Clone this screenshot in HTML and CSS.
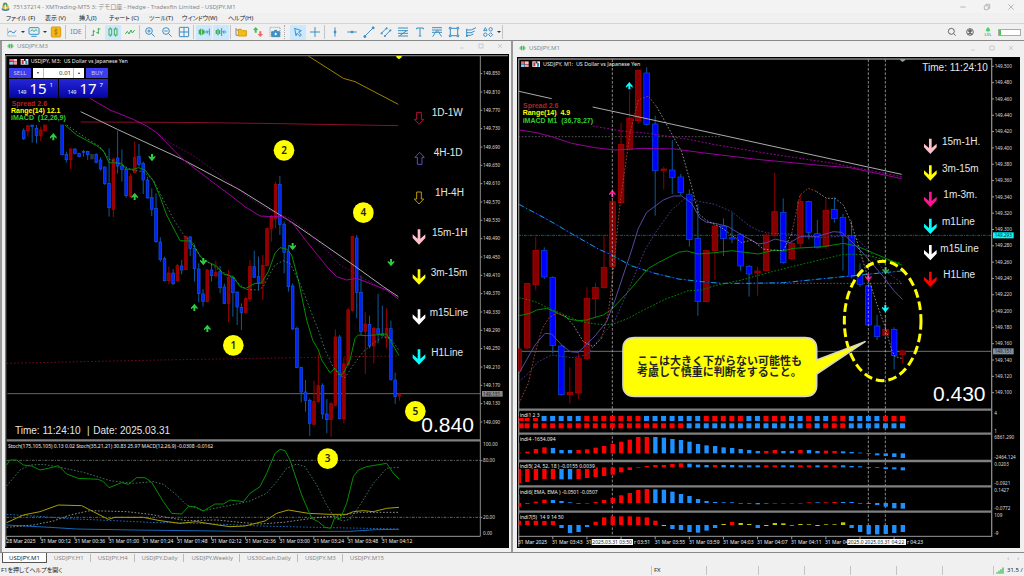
FILE: index.html
```html
<!DOCTYPE html>
<html lang="ja">
<head>
<meta charset="utf-8">
<title>75137214 - XMTrading-MT5 3</title>
<link rel="stylesheet" href="styles.css">
</head>
<body>
<div class="app">
  <header class="titlebar">
    <svg class="app-logo" viewBox="0 0 24 24"><circle cx="12" cy="14" r="9" fill="#e8b93c"/><circle cx="11" cy="7" r="6" fill="#4f9a57"/><path d="M2 15c5 7 15 7 20 0v6c-6 4-14 4-20 0z" fill="#3f7fb5"/><path d="M14 9c-5-2-7 3-2 4s3 6-3 3M12 7v11" stroke="#fff" stroke-width="2" fill="none"/></svg>
    <span class="app-title">75137214 - XMTrading-MT5 3: デモ口座 - Hedge - Tradexfin Limited - USDJPY,M1</span>
    <div class="window-controls">
      <button aria-label="Minimize"><svg viewBox="0 0 24 24"><path d="M4 12h16"/></svg></button>
      <button aria-label="Restore"><svg viewBox="0 0 24 24"><rect x="4" y="8" width="12" height="12" rx="2"/><path d="M9 7V4h11v12h-3"/></svg></button>
      <button aria-label="Close"><svg viewBox="0 0 24 24"><path d="M4 4l16 16M20 4L4 20"/></svg></button>
    </div>
  </header>
  <nav class="menubar">
    <a href="#">ファイル (F)</a><a href="#">表示 (V)</a><a href="#">挿入(I)</a><a href="#">チャート (C)</a><a href="#">ツール(T)</a><a href="#">ウインドウ(W)</a><a href="#">ヘルプ(H)</a>
  </nav>
  <div class="toolbar">
    <button class="tool" aria-label="New chart"><svg viewBox="0 0 36 36"><path d="M5 6v24h26" stroke="#b5c3cc"/><path d="M6 20q6-9 12-2t12-5"/></svg></button><button class="caret" aria-label="Chart list"></button>
    <button class="tool" aria-label="Profiles"><svg viewBox="0 0 36 36"><rect x="3" y="5" width="30" height="20" rx="3" fill="#e2f2fb"/><path d="M8 16l5-5 5 6 5-6 5 4" stroke="#4aa564"/><path d="M10 31h16"/></svg></button><button class="caret" aria-label="Profile list"></button>
    <button class="tool" aria-label="Market"><svg viewBox="0 0 36 36"><rect x="4" y="3" width="28" height="30" rx="3" fill="#f3b71b" stroke="#d99a0c"/><path d="M23 12c-9-4-13 4-5 6s3 10-6 5M18 8v20" stroke="#a86a00" stroke-width="2"/></svg></button>
    <i class="sep"></i>
    <button class="tool tool-ide">IDE</button>
    <i class="sep"></i>
    <button class="tool" aria-label="Bar chart"><svg class="green" viewBox="0 0 36 36"><path d="M10 12v18M4 28h6M10 16h5M25 6v18M19 20h6M25 9h6"/></svg></button>
    <button class="tool on" aria-label="Candles"><svg class="green" viewBox="0 0 36 36"><rect x="6" y="9" width="8" height="18"/><rect x="22" y="9" width="8" height="18"/><path d="M10 4v5M10 27v5M26 4v5M26 27v5"/></svg></button>
    <button class="tool" aria-label="Line chart"><svg class="green" viewBox="0 0 36 36"><path d="M4 24l6-8 5 8 6-12 4 9 7-9"/></svg></button>
    <i class="sep"></i>
    <button class="tool" aria-label="Zoom in"><svg viewBox="0 0 36 36"><circle cx="15" cy="15" r="10"/><path d="M23 23l9 9M10 15h10M15 10v10"/></svg></button>
    <button class="tool" aria-label="Zoom out"><svg viewBox="0 0 36 36"><circle cx="15" cy="15" r="10"/><path d="M23 23l9 9M10 15h10"/></svg></button>
    <button class="tool" aria-label="Tile windows"><svg viewBox="0 0 36 36"><rect x="4" y="4" width="28" height="28" rx="2"/><path d="M18 4v28M4 18h28"/></svg></button>
    <i class="sep"></i>
    <button class="tool on" aria-label="Auto scroll"><svg viewBox="0 0 36 36"><path d="M4 11v14M8 8v20M14 10v16M18 13v10" stroke="#3fae52" stroke-width="4"/><path d="M20 18h10M26 13l5 5-5 5M34 8v20"/></svg></button>
    <button class="tool on" aria-label="Chart shift"><svg viewBox="0 0 36 36"><path d="M4 12v12M9 8v20M14 12v12" stroke="#3fae52" stroke-width="4"/><path d="M20 6v24M34 18H24M28 13l-5 5 5 5"/></svg></button>
    <i class="sep"></i>
    <button class="tool" aria-label="Open folder"><svg viewBox="0 0 36 36"><path d="M3 6v22h6M3 12h8" stroke="#8b8b8b"/><path d="M10 10h9l3 4h12v16H10z" fill="#f6bd16" stroke="#d79b0b"/></svg></button>
    <button class="tool" aria-label="Trade"><svg viewBox="0 0 36 36"><path d="M11 3l8 9h-5v8H8v-8H3z" fill="#3fbf55" stroke="none"/><path d="M25 33l-8-9h5v-8h6v8h5z" fill="#e66" stroke="none"/></svg></button>
    <button class="tool" aria-label="Screenshot"><svg viewBox="0 0 36 36"><path d="M3 32V4h30v28" stroke-dasharray="3 3" stroke="#8a9aa5"/><path d="M8 17h6l3-4h6l3 4h6v15H8z" fill="#3d8fc4"/><circle cx="20" cy="24" r="5" fill="#fff"/></svg></button>
    <i class="sep grip"></i>
    <button class="tool on" aria-label="Cursor"><svg viewBox="0 0 36 36"><path d="M8 7l20 7-8 4 8 9-4 4-9-9-3 7z"/></svg></button>
    <button class="tool" aria-label="Crosshair"><svg viewBox="0 0 36 36"><path d="M18 3v30M3 18h30"/></svg></button>
    <i class="sep"></i>
    <button class="tool" aria-label="Vertical line"><svg viewBox="0 0 36 36"><path d="M18 4v28"/><circle cx="18" cy="18" r="3" fill="#3d8fc4"/></svg></button>
    <button class="tool" aria-label="Horizontal line"><svg viewBox="0 0 36 36"><path d="M4 18h28"/><circle cx="18" cy="18" r="3" fill="#3d8fc4"/></svg></button>
    <button class="tool" aria-label="Trend line"><svg viewBox="0 0 36 36"><path d="M5 31L31 5"/><path d="M3 29h5v5H3zM28 3h5v5h-5z" fill="#3d8fc4"/></svg></button>
    <button class="tool" aria-label="Channel"><svg viewBox="0 0 36 36"><path d="M4 22L20 6M14 31L32 12"/><circle cx="5" cy="22" r="2"/><circle cx="20" cy="7" r="2"/><circle cx="15" cy="30" r="2"/><circle cx="31" cy="13" r="2"/></svg></button>
    <button class="tool" aria-label="Fibonacci"><svg viewBox="0 0 36 36"><path d="M3 6h30M3 14h30M3 22h30M3 30h30M7 30L29 14"/></svg></button>
    <button class="tool" aria-label="Text"><svg viewBox="0 0 36 36"><path d="M8 10V6h20v4M18 6v24M14 30h8"/></svg></button>
    <button class="tool" aria-label="Fibonacci fan"><svg viewBox="0 0 36 36"><path d="M3 5h30M3 12h30M3 19h30M5 32L17 14h3l12 18"/></svg></button>
    <button class="tool" aria-label="Rectangle"><svg viewBox="0 0 36 36"><rect x="7" y="7" width="22" height="22"/><path d="M4 4h5v5H4zM27 4h5v5h-5zM4 27h5v5H4zM27 27h5v5h-5z" fill="#fff"/></svg></button>
    <button class="tool" aria-label="Pitchfork"><svg viewBox="0 0 36 36"><path d="M5 12q14 3 28-7M5 20q14 3 24-5M5 28q12 2 20-4M5 8v24"/><circle cx="6" cy="30" r="2"/></svg></button>
    <button class="tool" aria-label="Shapes"><svg viewBox="0 0 36 36"><path d="M5 14l5-9 5 9z"/><circle cx="26" cy="10" r="5"/><circle cx="10" cy="26" r="5"/><path d="M26 20l6 6-6 6-6-6z"/></svg></button><button class="caret" aria-label="More shapes"></button>
    <i class="sep"></i>
    <div class="toolbar-end">
      <button class="tool" aria-label="Search"><svg class="gray" viewBox="0 0 36 36"><circle cx="16" cy="16" r="9"/><path d="M23 23l6 6"/></svg></button>
      <button class="tool" aria-label="Account"><svg class="gray" viewBox="0 0 36 36"><circle cx="18" cy="18" r="10"/><circle cx="18" cy="15" r="4" fill="#666"/><path d="M11 25q7-8 14 0" fill="#666"/></svg></button>
      <button class="tool tool-lvl" aria-label="Level"><svg viewBox="0 0 36 24"><path d="M18 2l6 7h-3l5 6H10l5-6h-3zM18 14v8" fill="#4cc763" stroke="#4cc763"/></svg><span>LVL</span></button>
      <progress class="level" value="8" max="100" aria-label="Level"></progress>
    </div>
  </div>

  <main class="workspace">
    <section class="chart-window chart-window-left">
      <div class="chart-head">
        <svg class="candle-icon" viewBox="0 0 24 20"><path d="M3 7v7M9 2v17M15 2v17M21 7v7" /><path d="M6 5h4v10H6zM14 5h4v10h-4z"/></svg>
        <h2>USDJPY,M3</h2>
        <div class="chart-controls">
          <button aria-label="Minimize"><svg viewBox="0 0 18 18"><path d="M3 15h11"/></svg></button>
          <button aria-label="Maximize"><svg viewBox="0 0 18 18"><rect x="3" y="3" width="12" height="12"/></svg></button>
          <button aria-label="Close"><svg viewBox="0 0 18 18"><path d="M3 3l12 12M15 3L3 15"/></svg></button>
        </div>
      </div>
      <div class="chart">
        <svg id="chart-m3" class="plot" viewBox="15 162 1512 1482" role="img" aria-label="USDJPY M3"></svg>
        <form class="trade">
          <button type="button" class="side">SELL</button>
          <div class="volume"><button type="button" class="step down" aria-label="Less"></button><input type="text" value="0.01" aria-label="Volume"><button type="button" class="step up" aria-label="More"></button></div>
          <button type="button" class="side">BUY</button>
          <button type="button" class="quote"><small>149</small><b>15</b><sup>1</sup></button>
          <button type="button" class="quote"><small>149</small><b>17</b><sup>7</sup></button>
        </form>
      </div>
    </section>
    <section class="chart-window chart-window-right">
      <div class="chart-head">
        <svg class="candle-icon" viewBox="0 0 24 20"><path d="M3 7v7M9 2v17M15 2v17M21 7v7" /><path d="M6 5h4v10H6zM14 5h4v10h-4z"/></svg>
        <h2>USDJPY,M1</h2>
        <div class="chart-controls">
          <button aria-label="Minimize"><svg viewBox="0 0 18 18"><path d="M3 15h11"/></svg></button>
          <button aria-label="Maximize"><svg viewBox="0 0 18 18"><rect x="3" y="3" width="12" height="12"/></svg></button>
          <button aria-label="Close"><svg viewBox="0 0 18 18"><path d="M3 3l12 12M15 3L3 15"/></svg></button>
        </div>
      </div>
      <div class="chart">
        <svg id="chart-m1" class="plot" viewBox="1551 171 1509 1473" role="img" aria-label="USDJPY M1"></svg>
      </div>
    </section>
  </main>

  <nav class="tabs">
    <a class="active" href="#">USDJPY,M1</a><a href="#">USDJPY,H1</a><a href="#">USDJPY,H4</a><a href="#">USDJPY,Daily</a><a href="#">USDJPY,Weekly</a><a href="#">US30Cash,Daily</a><a href="#">USDJPY,M3</a><a href="#">USDJPY,M15</a>
    <div class="tab-scroll"><button aria-label="Previous">‹</button><button aria-label="Next">›</button></div>
  </nav>
  <footer class="status">
    <span class="hint">F1を押してヘルプを開く</span>
    <span class="cell cell-profile">FX</span><span class="cell cell-wide"></span><span class="cell"></span><span class="cell"></span><span class="cell"></span><span class="cell"></span><span class="cell cell-last"></span>
    <span class="cell net"><svg viewBox="0 0 24 20"><path d="M1 15h4v5H1zM7 11h4v9H7zM13 6h4v14h-4zM19 1h4v19h-4z"/></svg>31.5 /</span>
  </footer>
</div>
<script src="charts.js"></script>
</body>
</html>
```

FILE: styles.css
```css
* { box-sizing: border-box; }
body { margin: 0; background: #f0f0f0; color: #222; font: 6px/8px "Noto Sans", "Noto Sans CJK JP", sans-serif; }
button { padding: 0; border: 0; background: none; color: inherit; font: inherit; display: flex; align-items: center; justify-content: center; }
a { color: inherit; text-decoration: none; }
svg { display: block; }
.app { display: flex; flex-direction: column; min-height: 100vh; }

.titlebar { display: flex; align-items: center; height: 13px; padding: 0 4px 0 1px; gap: 3px; background: #f3f3f3; color: #888; }
.app-logo { width: 9px; height: 9px; }
.app-title { flex: 1; white-space: nowrap; }
.window-controls { display: flex; gap: 16px; padding-right: 5px; }
.window-controls svg { width: 8px; height: 8px; fill: none; stroke: #999; stroke-width: 2; }

.menubar { display: grid; grid-template-columns: 39px 34px 30px 40px 33px 46px 40px; height: 11px; padding-left: 6px; align-items: center; border-bottom: 1px solid #d4d4d4; font-feature-settings: "palt"; white-space: nowrap; }

.toolbar { display: flex; align-items: center; gap: 1px; height: 17px; padding: 0 3px 0 4px; border-bottom: 1px solid #888; }
.tool { width: 16px; height: 15px; flex: none; border-radius: 1px; }
.tool svg { width: 12px; height: 12px; fill: none; stroke: #3d8fc4; stroke-width: 3; }
.tool svg.green { stroke: #3fae52; }
.tool svg.gray { stroke: #666; }
.tool.on { background: #cce8ff; }
.tool-ide { color: #3d8fc4; font-size: 7px; }
.tool-lvl { flex-direction: column; color: #4cc763; font-size: 4px; line-height: 4px; font-weight: bold; }
.tool-lvl svg { width: 10px; height: 6px; }
.caret { width: 5px; height: 15px; margin-left: -1px; }
.caret::before { content: ""; border: 2px solid transparent; border-top-color: #333; border-bottom: 0; }
.sep { width: 2px; height: 14px; flex: none; border-left: 1px solid #c4c4c4; }
.grip { width: 5px; border-left: 1px dotted #aaa; }
.toolbar-end { display: flex; align-items: center; gap: 2px; margin-left: auto; }
.level { width: 23px; height: 7px; appearance: none; border: 1px solid #aaa; background: #fff; }
.level::-webkit-progress-bar { background: #fff; }
.level::-webkit-progress-value { background: #4c4; }

.workspace { flex: 1; display: grid; grid-template-columns: 513fr 511fr; align-items: start; }
.chart-window { background: #f0f0f0; }
.chart-window-left { padding: 0 2px 4px 3px; border-left: 2px solid #999; border-right: 2px solid #999; }
.chart-window-right { padding: 0 4px 4px 4px; }
.chart-head { display: flex; align-items: center; gap: 3px; height: 13px; padding: 0 6px 4px 2px; color: #888; }
.chart-window-right .chart-head { height: 16px; padding-bottom: 2px; }
.chart-head h2 { flex: 1; margin: 0; font-size: 6px; font-weight: normal; }
.candle-icon { width: 7px; height: 6px; fill: #3fbf55; stroke: #3fbf55; stroke-width: 2; }
.chart-controls { display: flex; gap: 13px; }
.chart-controls svg { width: 6px; height: 6px; fill: none; stroke: #bbb; stroke-width: 2; }
.chart { position: relative; background: #000; }
.plot { width: 100%; height: auto; }

.trade { position: absolute; left: 4px; top: 14px; display: grid; grid-template-columns: 22px 53px 22px; gap: 1px; width: 99px; color: #fff; }
.side { height: 10px; background: #3c3cf0; color: #ccd; font-size: 6px; }
.volume { display: flex; height: 10px; margin: 0 1px; background: #fff; }
.volume input { flex: 1; min-width: 0; padding: 0 2px; border: solid #bbb; border-width: 0 1px; color: #333; font: 6px/8px "Noto Sans", sans-serif; text-align: right; }
.step { width: 10px; }
.step::before { content: ""; border: 1px solid transparent; }
.down::before { border-top: 2px solid #333; border-bottom: 0; }
.up::before { border-bottom: 2px solid #333; border-top: 0; }
.quote { height: 19px; gap: 3px; background: linear-gradient(#2626d8, #0404a4); align-items: baseline; justify-content: flex-end; padding: 0 5px 0 0; line-height: 19px; }
.trade .quote { width: 49px; grid-row: 2; grid-column: 1; }
.trade .quote:last-child { grid-column: 2 / 4; justify-self: end; }
.quote small { font-size: 5px; }
.quote b { font-size: 15px; font-weight: normal; }
.quote sup { align-self: flex-start; font-size: 6px; line-height: 12px; }

.plot text { font-family: "Noto Sans", sans-serif; white-space: pre; }
.plot .axis { font-size: 14px; fill: #ddd; }
.plot .time { font-size: 15px; fill: #eee; }
.plot .info { font-size: 15px; fill: #eee; }
.plot .symbol { font-size: 16px; fill: #eee; }
.plot .param { font: bold 21px "Liberation Sans", sans-serif; }
.plot .label { font: 30px "Liberation Sans", sans-serif; fill: #e6e6e6; }
.plot .big { font: 63px "Liberation Sans", sans-serif; fill: #fff; }
.plot .num { font: 600 30px "Noto Sans", sans-serif; fill: #222; text-anchor: middle; }
.plot .note { font: bold 33px "Noto Sans CJK JP", sans-serif; fill: #222; }

.tabs { display: flex; align-items: center; height: 12px; padding: 0 5px 1px 2px; border-top: 1px solid #888; color: #888; white-space: nowrap; }
.tabs a { padding: 0 6px 0 7px; border-right: 1px solid #bbb; }
.tabs a:nth-child(8) { border-right: 0; }
.tabs a.active { height: 10px; padding: 1px 6px; background: #fff; color: #222; border: solid #555; border-width: 0 1px 1px 1px; }
.tab-scroll { display: flex; gap: 8px; margin-left: auto; }

.status { display: flex; align-items: center; height: 12px; }
.hint { flex: 1; padding-left: 1px; font-feature-settings: "palt"; }
.cell { width: 46px; height: 9px; padding-left: 2px; border-left: 1px solid #c4c4c4; }
.cell-profile { width: 55px; }
.cell-wide { width: 52px; }
.cell-last { width: 51px; }
.net { display: flex; align-items: center; gap: 3px; width: 31px; white-space: nowrap; }
.net svg { width: 8px; height: 7px; flex: none; fill: #3fbf55; }
```

FILE: charts.js
```js
// Chart space uses three units per CSS pixel.
const NS = "http://www.w3.org/2000/svg";

function el(parent, name, attrs, text) {
  const node = document.createElementNS(NS, name);
  for (const key in attrs) node.setAttribute(key, attrs[key]);
  if (text !== undefined) node.textContent = text;
  parent.appendChild(node);
  return node;
}
const group = (parent, x, y) => el(parent, "g", { transform: `translate(${x} ${y})` });
const rect = (p, x, y, w, h, fill) => el(p, "rect", { x, y, width: w, height: h, fill });
const text = (p, cls, x, y, value, fill) => el(p, "text", fill ? { class: cls, x, y, style: `fill:${fill}` } : { class: cls, x, y }, value);
const line = (p, points, stroke, dash, width) =>
  el(p, "polyline", { points, fill: "none", stroke, "stroke-width": width || 3, "stroke-dasharray": dash || "none", "stroke-linejoin": "round" });

function candles(p, rows, x0, step, width, red, blue) {
  rows.forEach(([i, high, top, bottom, low, kind]) => {
    const x = x0 + step * i;
    const c = { r: red, b: blue, g: ["#333", "#333", "#333"] }[kind];
    line(p, `${x},${high} ${x},${low}`, c[1]);
    el(p, "rect", { x: x - width / 2, y: top, width, height: Math.max(bottom - top, 3), fill: c[0], stroke: c[2], "stroke-width": 2 });
  });
}

function smallArrow(p, x, y, up, fill) {
  el(p, "path", { d: "M0-11L10 1V6L3 1V11H-3V1L-10 6V1Z", fill, transform: `translate(${x} ${y}) rotate(${up ? 0 : 180})` });
}
function solidArrow(p, x, y, fill) {
  el(p, "path", { d: "M-4-23H4V5L19-8V3L0 23L-19 3V-8L-4 5Z", fill, transform: `translate(${x} ${y})` });
}
function outlineArrow(p, x, y, up, stroke) {
  el(p, "path", { d: "M-7-18H7V3H14L0 18L-14 3H-7Z", fill: "none", stroke, "stroke-width": 3, transform: `translate(${x} ${y}) rotate(${up ? 180 : 0})` });
}
function badge(p, x, y, n) {
  el(p, "circle", { cx: x, cy: y, r: 31, fill: "#ff0" });
  text(p, "num", x, y + 10, n);
}
function headIcons(p, x, y) {
  rect(p, x, y, 11, 8, "#e66"); rect(p, x + 12, y, 11, 8, "#fbb");
  rect(p, x, y + 9, 11, 8, "#8cf"); rect(p, x + 12, y + 9, 11, 8, "#f99");
  rect(p, x + 34, y, 23, 17, "#eee"); rect(p, x + 37, y + 3, 6, 12, "#c33"); rect(p, x + 48, y + 5, 6, 11, "#28c");
  rect(p, x + 44, y, 5, 6, "#222");
}

function drawM3() {
  const s = document.getElementById("chart-m3");

  line(s, "17,1640 17,167 1524,167", "#777", "", 4);
  const g = group(s, 0, 330);
  line(g, "22,851 1441,851", "#666");
  line(g, "242,36 525,37 780,40 1195,47", "#8a0f2c");
  line(g, "20,760 200,756 480,750 780,745 1195,738", "#a01030", "5 6", 2);
  line(g, "925,-162 1030,-95 1065,-85 1195,-17", "#a08000");

  const blue = ["#0022ff", "#0d5a9e", "#1258d8"], red = ["#900000", "#a00000", "#b80000"];
  candles(g, [
    [0,55,62,86,90,"b"],[1,45,47,62,80,"r"],[2,45,45,50,98,"b"],[3,45,55,76,100,"b"],[4,50,60,76,93,"r"],[5,45,45,62,65,"r"],
    [9,45,45,134,136,"b"],[10,125,133,149,158,"b"],[11,115,117,149,177,"r"],[12,115,117,130,133,"b"],[13,128,130,140,142,"b"],
    [14,120,124,126,140,"b"],[15,122,124,134,150,"b"],[16,133,133,147,147,"g"],[17,130,133,157,160,"b"],[18,142,150,177,182,"b"],
    [19,170,171,220,225,"b"],[20,115,220,293,320,"b"],[21,143,147,298,322,"r"],[22,62,144,168,190,"b"],[23,118,168,178,215,"b"],
    [24,172,178,257,263,"b"],[25,190,200,259,262,"r"],[26,95,142,188,190,"r"],[27,102,140,163,170,"b"],[28,155,160,210,252,"b"],
    [29,200,210,264,266,"b"],[30,235,262,298,318,"b"],[31,250,295,395,398,"b"],[32,382,396,449,455,"b"],[33,440,446,512,514,"b"],
    [34,470,489,512,523,"r"],[35,477,489,521,525,"b"],[36,462,467,512,514,"r"],[37,450,468,480,493,"b"],[38,378,380,479,480,"r"],
    [39,378,381,415,438,"b"],[40,403,415,476,515,"b"],[41,460,477,551,577,"b"],[42,537,552,574,590,"b"],[43,477,480,575,577,"r"],
    [44,460,480,497,515,"b"],[45,452,488,498,500,"r"],[46,468,485,533,550,"b"],[47,521,531,580,582,"b"],[48,480,502,580,637,"r"],
    [49,497,502,548,620,"b"],[50,545,546,591,645,"b"],[51,580,592,607,660,"b"],[52,560,566,607,610,"r"],[53,450,470,566,575,"r"],
    [54,422,470,502,503,"b"],[55,440,500,520,540,"b"],[56,435,466,521,570,"r"],[57,353,356,467,470,"r"],[58,315,320,355,395,"r"],
    [59,215,223,325,355,"r"],[60,198,223,343,375,"b"],[61,335,343,427,490,"b"],[62,405,425,530,545,"b"],[63,520,528,657,660,"b"],
    [64,650,655,772,774,"b"],[65,770,772,846,877,"b"],[66,810,846,871,905,"b"],[67,865,871,940,978,"b"],[68,812,875,943,945,"r"],
    [69,733,827,875,878,"r"],[70,820,827,912,927,"b"],[71,867,912,929,970,"b"],[72,875,881,929,980,"r"],[73,658,681,886,888,"r"],
    [74,675,681,926,928,"b"],[75,742,762,926,940,"r"],[76,594,600,765,767,"r"],[77,378,379,601,605,"r"],[78,375,384,547,625,"b"],
    [79,497,547,664,675,"b"],[80,607,642,664,792,"r"],[81,617,643,708,715,"b"],[82,650,655,708,760,"r"],[83,552,656,672,700,"b"],
    [84,587,670,677,680,"b"],[85,595,655,684,715,"r"],[86,632,656,808,812,"b"],[87,788,810,860,882,"b"],[88,848,852,858,872,"r"]
  ], 71, 12.81, 8, red, blue);

  line(g, "242,5 352,58 545,147 720,240 840,315 880,340 1060,465 1150,530 1195,560", "#aaa");
  line(g, "270,-35 330,0 400,28 440,48 470,68 545,145 580,172 640,218 690,255 735,290 780,318 820,320 850,320 880,342 920,395 985,475 1010,500 1040,510 1070,505 1160,540 1195,567", "#a000a0");
  line(g, "470,68 510,98 580,137 640,180 720,243 780,285 830,310 870,325 920,362 970,410 1020,465 1100,510 1195,562", "#a000a0", "5 5", 2);
  line(g, "195,45 230,75 290,107 310,122 327,158 365,160 378,177 400,178 416,173 435,180 460,213 480,260 500,315 540,392 570,393 585,415 610,450 650,468 670,492 700,500 720,530 738,535 760,522 785,518 805,485 825,430 840,413 860,417 875,435 895,510 920,630 938,690 955,720 965,750 990,788 1005,775 1020,795 1030,790 1050,750 1065,685 1075,675 1100,677 1160,672 1170,690 1197,737", "#009000");
  line(g, "200,45 260,85 300,110 327,147 360,162 395,180 430,185 460,210 490,270 525,335 555,380 580,400 600,440 650,475 700,505 735,538 775,540 790,530 805,500 825,465 850,452 870,460 900,520 935,610 955,660 975,720 1000,772 1018,795 1035,803 1060,765 1090,725 1120,700 1150,680 1170,685 1197,720", "#5fa58c", "5 6", 2);

  [[160,80,1],[456,143,0],[404,259,1],[610,455,0],[583,592,1],[622,655,1],[878,410,0],[1173,458,0]].forEach(a => smallArrow(g, ...a, "#2ecc40"));
  el(s, "path", { d: "M1189 168h16v4l-8 6l-8-6z", fill: "#ff0" });

  outlineArrow(s, 1257, 355, false, "#b01038");
  outlineArrow(s, 1259, 475, true, "#5a4fc0");
  outlineArrow(s, 1257, 594, false, "#c09a00");
  [["#ffc0cb", 711], ["#ff0", 831], ["#fff", 951], ["#0ff", 1071]].forEach(([c, y]) => solidArrow(s, 1257, y, c));
  [[1295,347,"1D-1W"],[1301,469,"4H-1D"],[1305,589,"1H-4H"],[1296,708,"15m-1H"],[1292,828,"3m-15m"],[1289,948,"m15Line"],[1294,1067,"H1Line"]].forEach(([x, y, t]) => text(s, "label", x, y, t));

  text(s, "label", 45, 1301, "Time: 11:24:10");
  text(s, "label", 261, 1301, "|");
  text(s, "label", 280, 1301, "Date: 2025.03.31");
  text(s, "big", 1264, 1297, "0.840");

  headIcons(s, 28, 177);
  text(s, "symbol", 92, 190, "USDJPY, M3:  US Dollar vs Japanese Yen");
  text(s, "param", 35, 317, "Spread 2.6", "#b22222");
  text(s, "param", 33, 339, "Range(14) 12.1", "#ff0");
  text(s, "param", 33, 361, "iMACD  (12,26,9)", "#32cd32");

  const o = group(s, 0, 990);
  line(o, "20,331 1441,331", "#808080", "", 7);
  line(o, "20,391 1441,391", "#999", "8 4 3 4", 2);
  line(o, "20,562 1441,562", "#999", "8 4 3 4", 2);
  line(o, "20,553 130,560 200,566 300,570 450,577 600,580 780,588 950,592 1197,597", "#1668b8", "5 5");
  line(o, "20,585 150,592 230,597 400,600 650,603 780,605 1050,604 1130,599 1197,598", "#1668b8");
  line(o, "20,592 100,585 160,573 210,555 270,542 380,545 450,553 500,562 560,572 650,570 720,577 780,582 850,577 950,563 1010,558 1080,547 1197,547", "#ccc", "5 5", 2);
  line(o, "20,578 70,555 120,545 175,525 245,527 280,545 325,568 345,562 430,562 480,572 540,580 590,575 640,583 690,590 735,588 795,573 830,550 865,540 925,550 990,553 1040,553 1060,545 1090,542 1120,545 1160,535 1197,532", "#a8a000");
  line(o, "20,468 60,420 90,405 130,403 180,412 250,427 330,452 400,460 460,455 490,463 530,495 560,525 610,542 680,528 720,520 750,513 800,490 830,455 860,415 890,402 915,410 950,465 980,525 1005,565 1030,573 1050,568 1080,525 1120,460 1160,415 1197,412", "#5fa58c", "5 5", 2);
  line(o, "20,405 30,390 50,390 70,405 95,408 120,420 145,415 175,407 200,432 235,445 295,448 310,455 327,473 365,458 385,463 410,443 435,443 455,457 490,515 515,550 545,552 565,530 585,530 610,543 645,522 670,522 690,510 730,515 750,490 780,470 800,430 825,370 840,358 855,362 870,390 905,495 935,565 955,575 975,592 992,595 1005,560 1020,568 1040,520 1060,440 1075,420 1100,410 1160,400 1180,430 1197,447", "#009000");
  text(o, "info", 24, 354, "Stoch(175,105,105) 0.13 0.02 Stoch(35,21,21) 30.83 25.97 MACD(12,26,9) -0.0308 -0.0162");
  line(o, "20,619 1441,619", "#999");
  "28 Mar 2025,31 Mar 00:12,31 Mar 00:36,31 Mar 01:00,31 Mar 01:24,31 Mar 01:48,31 Mar 02:12,31 Mar 02:36,31 Mar 03:00,31 Mar 03:24,31 Mar 03:48,31 Mar 04:12".split(",").forEach((t, i) => {
    const x = 19 + i * 102.4;
    line(o, `${x + 1},619 ${x + 1},628`, "#999");
    text(o, "time", x, 640, t);
  });
  [[342, "100.00"], [392, "80.00"], [562, "20.00"], [611, "0.00"]].forEach(([y, t]) => {
    if (y > 350 && y < 600) line(o, `1441,${y} 1447,${y}`, "#999");
    text(o, "axis", 1449, y + 5, t);
  });

  line(s, "1441,167 1441,1609", "#888");
  for (let i = 0; i < 20; i++) {
    const y = 221 + i * 55;
    line(s, `1441,${y} 1447,${y}`, "#999");
    if (i !== 17) text(s, "axis", 1449, y + 5, (149.85 - i * 0.04).toFixed(3));
    else text(s, "axis", 1449, y + 4, "149.170");
  }
  rect(s, 1446, 1173, 62, 17, "#888");
  text(s, "axis", 1449, 1187, "149.151", "#222");

  badge(s, 700, 1036, "1"); badge(s, 852, 451, "2"); badge(s, 983, 1376, "3"); badge(s, 1090, 638, "4"); badge(s, 1246, 1234, "5");
}

function drawM1() {
  const s = document.getElementById("chart-m1");
  const clip = el(s, "clipPath", { id: "m1-clip" });
  rect(clip, 10, 26, 1420, 1460, "#000");

  line(s, "1556,1640 1556,177 2975,177", "#888", "", 4);
  const g = group(s, 1545, 150);
  const c = el(g, "g", { "clip-path": "url(#m1-clip)" });
  line(c, "10,904 1430,904", "#66707a");
  line(c, "10,556 1430,556", "#1a9a9a", "8 3 3 3", 2);
  line(c, "10,260 620,260", "#777", "5 5", 2);
  line(c, "705,700 1160,700", "#888", "5 5", 2);

  const blue = ["#0000ff", "#0a5a9a", "#0a50d0"], red = ["#840000", "#900000", "#b40000"];
  candles(c, [
    [0,895,897,963,965,"r"],[1,700,700,894,898,"r"],[2,560,601,704,722,"r"],[3,592,601,681,687,"b"],[4,679,682,887,910,"b"],
    [5,885,888,1034,1037,"b"],[6,952,1027,1034,1061,"r"],[7,910,924,1029,1047,"r"],[8,712,745,926,930,"r"],[9,698,712,746,805,"r"],
    [10,555,652,713,715,"r"],[11,450,455,650,652,"r"],[12,218,283,458,466,"r"],[13,122,204,298,302,"r"],[14,58,61,212,222,"r"],
    [15,52,69,223,226,"b"],[16,197,222,362,497,"b"],[17,350,357,361,418,"r"],[18,270,360,382,432,"b"],[19,372,381,428,436,"b"],
    [20,418,434,569,590,"b"],[21,462,565,755,797,"b"],[22,600,602,755,757,"r"],[23,525,528,602,690,"r"],[24,505,528,566,618,"b"],
    [25,487,563,567,580,"b"],[26,550,554,648,662,"b"],[27,645,649,672,740,"b"],[28,650,663,669,737,"r"],[29,550,555,662,664,"r"],
    [30,368,485,556,560,"r"],[31,445,487,638,641,"b"],[32,570,580,626,630,"r"],[33,432,454,580,595,"r"],[34,452,454,547,568,"b"],
    [35,510,551,593,596,"b"],[36,445,481,590,597,"r"],[37,442,478,506,518,"b"],[38,492,502,556,662,"b"],[39,512,556,680,685,"b"],
    [40,640,677,703,710,"b"],[41,700,706,825,828,"b"],[42,795,828,860,870,"b"],[43,795,838,857,860,"r"],[44,832,838,917,958,"b"],
    [45,900,903,914,940,"r"]
  ], 11, 25.6, 17, red, blue);

  line(c, "12,463 100,510 180,557 250,597 290,615 350,648 420,670 490,687 560,695 620,700 705,700 805,698 905,688 1005,678 1065,672 1160,663", "#0010a0");
  line(c, "12,463 100,510 180,557 250,597 290,615 350,648 420,670 490,687 560,695 620,700 705,700 805,698 905,688 1005,678 1065,672 1160,663", "#12a0b0", "16 8 3 8");
  line(c, "12,124 110,146", "#aaa");
  line(c, "233,171 400,207 600,251 765,287 1160,373", "#aaa");
  line(c, "12,240 60,247 110,260 170,280 240,293 300,300 340,298 380,295 480,297 560,308 725,328 925,347 1005,353 1160,386", "#9a009a");
  line(c, "233,228 320,243 400,250 520,268 600,284 755,310 955,340 1160,380", "#9a009a", "6 5");
  line(c, "12,797 45,790 65,780 95,775 130,790 165,808 190,812 215,810 240,802 265,795 290,778 340,725 400,655 430,638 490,607 515,603 550,612 600,608 650,602 730,612 780,600 805,603 835,595 925,590 985,580 1025,588 1065,605 1160,645", "#008a00");
  line(c, "12,743 60,755 110,778 190,812 215,818 270,825 300,820 340,805 380,783 450,748 520,722 560,720 600,707 680,690 745,672 830,650 935,625 985,613 1045,613 1105,628 1160,640", "#008a00", "5 5");
  line(c, "12,970 60,885 90,850 110,852 140,885 165,905 190,907 240,858 275,815 300,750 350,600 370,535 395,487 445,450 475,438 500,438 530,460 555,505 575,517 600,520 640,530 680,555 730,582 755,578 780,567 825,578 855,560 905,560 955,545 980,547 1015,580 1045,610 1105,680 1135,720 1162,748", "#5548a0");
  line(c, "12,995 40,970 70,935 110,915 170,923 215,915 250,870 300,810 340,720 390,600 420,550 470,480 510,445 540,452 600,463 650,485 700,525 730,542 765,550 825,552 905,563 995,558 1025,565 1065,605 1105,660 1160,698", "#44398a", "5 5");
  line(c, "12,1060 40,1000 60,910 80,840 100,805 125,790 150,798", "#a04030", "5 5");
  line(c, "150,798 175,825 205,875 235,890 260,865", "#ccc", "5 5", 2);
  line(c, "260,865 280,790 295,660 315,460 345,250 370,150 400,138 425,170", "#a04030", "5 5");
  line(c, "425,170 475,260 500,305 530,410 550,490 575,512 615,530 650,555 680,578 710,570 745,597 765,600 805,602 830,550", "#ccc", "5 5", 2);
  line(c, "830,550 855,435 880,415 905,425", "#a04030", "5 5");
  line(c, "905,425 935,445 960,445 985,465 1005,510 1025,570 1055,670 1085,760 1110,830 1130,900 1140,920 1160,925", "#ccc", "5 5", 2);

  smallArrow(g, 343, 107, true, "#0ff");
  smallArrow(g, 292, 430, true, "#ff1493");
  smallArrow(g, 1060, 683, false, "#ff1493");
  smallArrow(g, 1112, 662, false, "#3a9a5a");
  smallArrow(g, 1111, 776, false, "#0ff");
  el(s, "path", { d: "M2700 177h16v3l-8 6l-8-6z", fill: "#8aa0aa" });

  text(s, "label", 2767, 213, "Time: 11:24:10");
  [["#ffc0cb",439,2826,435,"15m-1H."],["#ff0",519,2826,515,"3m-15m"],["#ff1493",598,2830,594,"1m-3m."],["#0ff",679,2826,674,"m1Line"],["#fff",758,2821,755,"m15Line"],["#f00",838,2830,834,"H1Line"]].forEach(([fill, ay, x, y, t]) => {
    solidArrow(s, 2791, ay, fill);
    text(s, "label", x, y, t);
  });
  text(s, "big", 2799, 1204, "0.430");

  headIcons(s, 1563, 184);
  text(s, "symbol", 1629, 197, "USDJPY, M1:  US Dollar vs Japanese Yen");
  text(s, "param", 1569, 324, "Spread 2.6", "#b22222");
  text(s, "param", 1568, 346, "Range(14)  4.9", "#ff0");
  text(s, "param", 1568, 369, "iMACD M1  (36,78,27)", "#32cd32");

  // Indicator strips
  const p = group(s, 1545, 1200);
  const hue = { r: "#f00", b: "#1e90ff", y: "#c8c800" };
  const X = i => 11 + 25.6 * i;
  [29, 101, 183, 259, 335].forEach(y => line(p, `10,${y} 1430,${y}`, "#808080", "", 7));
  line(p, "10,409 1430,409", "#999");
  ["rrrbbbbbrrrrrrrbbbbbbbrrrrrbbrrrbbrbbrrbbbbrrr", "rrrrrrrrrrrrrrrrrrrrbbbbbbbbbbbbbbrbrrrbbbbbbb"].forEach((row, n) =>
    [...row].forEach((k, i) => rect(p, Math.max(X(i) - 8, 11), 48 + n * 22, 15, 15, hue[k])));

  const bars = (base, colors, ends) => ends.forEach((v, i) => {
    const x = Math.max(X(i) - 6, 11);
    rect(p, x, Math.min(base, v), X(i) + 7 - x, Math.max(Math.abs(v - base), 2), hue[colors[i]]);
  });
  bars(160, "rrrrbbbrrrrrrrrrbbbbbbbbbbbbbrrbbrbbrrbbbbbbbb",
    [158,155,147,142,144,150,150,150,148,143,138,132,125,119,111,111,111,113,117,120,125,132,136,138,142,144,147,150,153,153,150,153,153,150,150,153,152,153,154,156,158,162,166,168,171,174]);
  bars(202, "rrrrrbbrrrrrrrrrrrrrbbbrbbbbbrrbbrrbrrbbbbbbbb",
    [249,246,240,237,237,238,238,237,234,231,228,224,217,210,204,198,195,195,192,190,191,194,195,195,195,195,196,196,196,196,196,196,196,196,196,196,196,196,196,198,199,203,204,207,208,211]);
  bars(309, "rrrrbbbbrrrrrrrrbbbbbbbbbbbbbrrrrrrbrrbbbbbbbb",
    [320,312,305,299,300,303,307,311,311,306,300,294,286,279,270,267,268,269,275,282,288,297,303,306,307,307,311,311,313,312,311,311,311,311,307,307,307,306,306,306,311,312,315,320,325,326]);
  bars(375, "rrrrrbbbbrrrrrrrrybbbbbbyryybyyyyyyyyyybbbbbbb",
    [362,362,362,363,363,384,399,396,381,365,352,349,349,349,350,352,362,378,387,390,396,398,392,384,372,366,369,372,384,378,369,370,377,372,373,378,373,373,367,384,396,403,403,402,399,396]);

  [[51,"indi1 2 3"],[124,"indi4 -1654.094"],[204,"indi5( 24, 52, 18 ) -0.0155 0.0039"],[281,"indi6( EMA, EMA ) -0.0501 -0.0507"],[358,"indi7(5)  14 9 14 50"]].forEach(([y, t]) => {
    const label = text(p, "info", 14, y, t);
    const box = label.getBBox();
    p.insertBefore(rect(p, 12, y - 14, box.width + 4, 17, "#000"), label);
  });
  [[39,"4"],[93,"1"],[113,"6861.290"],[173,"-2464.124"],[193,"0.0203"],[249,"-0.0921"],[270,"0.1427"],[326,"-0.0772"],[346,"109"],[401,"-9"]].forEach(([y, t]) => text(p, "axis", 1438, y + 5, t));

  // Time axis; the crosshair date tags cover the start or end of some labels
  for (let i = 0; i < 12; i++) line(p, `${11 + i * 102.4},409 ${11 + i * 102.4},418`, "#999");
  [[9,"31 Mar 2025"],[111,"31 Mar 03:43"],[213,"31"],[357,"r 03:51"],[419,"31 Mar 03:55"],[522,"31 Mar 03:59"],[624,"31 Mar 04:03"],[726,"31 Mar 04:07"],[828,"31 Mar 04:11"],[930,"31 Mar 04"],[1176,"r 04:23"]].forEach(([x, t]) => text(p, "time", x, 431, t));
  [[230, 124, "2025.03.31 03:50"], [997, 50, "2025.0"], [1047, 126, "2025.03.31 04:22"]].forEach(([x, w, t]) => {
    rect(p, x, 417, w, 18, "#fff");
    text(p, "time", x + 2, 431, t, "#222");
  });

  [292, 1060, 1111].forEach(x => line(g, `${x},28 ${x},1459`, "#ccc", "8 5", 2));

  line(s, "2975,175 2975,1611", "#888", "", 4);
  for (let i = 0; i <= 20; i++) {
    const y = 199 + i * 48.95;
    line(s, `2975,${y} 2982,${y}`, "#999");
    text(s, "axis", 2984, y + 5, (149.5 - i * 0.02).toFixed(3));
  }
  rect(s, 2979, 697, 62, 18, "#0ff");
  text(s, "axis", 2984, 711, "149.293", "#222");
  rect(s, 2979, 1045, 62, 18, "#8090a0");
  text(s, "axis", 2984, 1059, "149.151", "#222");

  // Highlight and note
  el(s, "ellipse", { cx: 2648, cy: 963, rx: 115, ry: 179, fill: "none", stroke: "#ff0", "stroke-width": 9, "stroke-dasharray": "26 12" });
  el(s, "path", { d: "M1904 1013H2415Q2450 1013 2450 1048V1080L2595 1025L2450 1122V1155Q2450 1189 2415 1189H1904Q1869 1189 1869 1155V1048Q1869 1013 1904 1013Z", fill: "#ff0", stroke: "#d8d8c0", "stroke-width": 5, "stroke-linejoin": "round" });
  text(s, "note", 1911, 1094, "ここは大きく下がらない可能性も");
  text(s, "note", 1911, 1127, "考慮して慎重に判断をすること。");
}

drawM3();
drawM1();
```
